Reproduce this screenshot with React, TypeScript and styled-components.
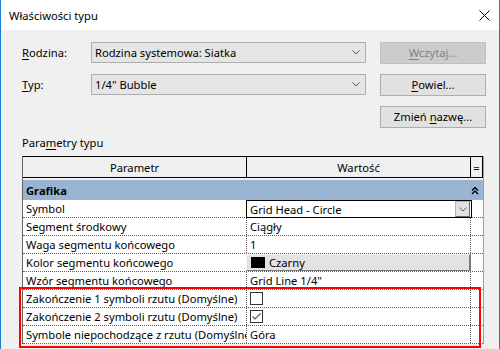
import React from 'react';
import styled, { createGlobalStyle, css } from 'styled-components';

const GlobalStyle = createGlobalStyle`
  html, body {
    margin: 0;
    padding: 0;
    background: #f0f0f0;
  }
  body {
    font-family: "Noto Sans", "DejaVu Sans", sans-serif;
    font-size: 11.2px;
    color: #000;
  }
  u {
    text-underline-offset: 2px;
  }
`;

const Window = styled.div`
  width: 500px;
  height: 349px;
  box-sizing: border-box;
  overflow: hidden;
  border-left: 1px solid #1a7fd4;
  border-right: 1px solid #1a7fd4;
  background: #f0f0f0;
  display: flex;
  flex-direction: column;
`;

const TitleBar = styled.div`
  flex: none;
  height: 30px;
  background: #fff;
  display: flex;
  align-items: center;
  justify-content: space-between;
  padding: 0 9px 0 8px;
`;

const Body = styled.div`
  padding: 12px 0 0 21px;
`;

const TopForm = styled.div`
  display: grid;
  grid-template-columns: 55px 275px 106px;
  grid-auto-rows: 21px;
  column-gap: 14px;
  row-gap: 11px;
  align-items: center;
`;

const Label = styled.div`
  white-space: nowrap;
`;

const Combo = styled.div`
  height: 21px;
  box-sizing: border-box;
  border: 1px solid #adadad;
  background: #e5e5e5;
  display: flex;
  align-items: center;
  justify-content: space-between;
  padding: 0 5px 0 3px;
  white-space: nowrap;
`;

const Button = styled.div<{ $disabled?: boolean; $col?: number }>`
  height: 22px;
  box-sizing: border-box;
  border: 1px solid #adadad;
  background: #e1e1e1;
  display: flex;
  align-items: center;
  justify-content: center;
  white-space: pre;
  ${(p) => p.$col && css`grid-column: ${p.$col};`}
  ${(p) =>
    p.$disabled &&
    css`
      background: #cccccc;
      border-color: #bfbfbf;
      color: #838383;
    `}
`;

const SectionLabel = styled.div`
  margin: 8px 0 5px 0;
  height: 16px;
  line-height: 16px;
`;

const PropGrid = styled.div`
  width: 462px;
  box-sizing: border-box;
  border-left: 1px solid #646464;
  border-right: 1px solid #a0a0a0;
  display: flex;
  flex-direction: column;
`;

const HeaderRow = styled.div`
  display: grid;
  grid-template-columns: 224px 224px 12px;
  height: 22px;
  box-sizing: border-box;
  border-top: 1px solid #000;
  border-bottom: 1px solid #000;
  margin-bottom: 2px;
`;

const HeaderCell = styled.div`
  border-right: 1px solid #000;
  display: flex;
  align-items: center;
  justify-content: center;
`;

const GroupRow = styled.div`
  display: grid;
  grid-template-columns: 448px 12px;
  height: 20px;
  background: #99b4d1;
  align-items: center;
`;

const GroupTitle = styled.div`
  font-weight: bold;
  padding-left: 3px;
`;

const Row = styled.div`
  display: grid;
  grid-template-columns: 224px 224px 12px;
  height: 18px;
  box-sizing: border-box;
  border-bottom: 1px dotted #5f5f5f;
  background: #fff;
`;

const Cell = styled.div<{ $last?: boolean }>`
  padding-left: 3px;
  line-height: 17px;
  white-space: nowrap;
  overflow: hidden;
  ${(p) => !p.$last && css`border-right: 1px dotted #5f5f5f;`}
`;

const ComboCell = styled.div`
  margin: 0 -1px -1px -1px;
  height: 18px;
  box-sizing: border-box;
  border: 1px solid #000;
  background: #fff;
  display: flex;
  align-items: center;
  justify-content: space-between;
  padding-left: 3px;
`;

const DropButton = styled.div`
  width: 15px;
  height: 16px;
  box-sizing: border-box;
  margin-right: 1px;
  background: #e1e1e1;
  border: 1px solid #b4b4b4;
  border-right-color: #6a6a6a;
  border-bottom-color: #6a6a6a;
  display: flex;
  align-items: center;
  justify-content: center;
`;

const ColorButton = styled.div`
  margin-left: -1px;
  height: 17px;
  box-sizing: border-box;
  background: #e3e3e3;
  border: 1px solid #f4f4f4;
  border-right: 2px solid #7a7a7a;
  border-bottom: 1px solid #7a7a7a;
  display: flex;
  align-items: center;
  gap: 4px;
  padding-left: 4px;
`;

const Swatch = styled.div`
  width: 14px;
  height: 11px;
  background: #000;
`;

const CheckBox = styled.div`
  width: 13px;
  height: 13px;
  margin-top: 2px;
  box-sizing: border-box;
  border: 1px solid #333;
  background: #fff;
  display: flex;
  align-items: center;
  justify-content: center;
`;

const Highlight = styled.div`
  position: relative;
  &::after {
    content: '';
    position: absolute;
    top: -3px;
    left: -4px;
    right: 2px;
    bottom: -4px;
    border: 2px solid #f00;
    pointer-events: none;
  }
`;

const Chevron = () => (
  <svg width="8" height="5" viewBox="0 0 8 5">
    <polyline points="0.5,0.5 4,4 7.5,0.5" fill="none" stroke="#606060" strokeWidth="1" />
  </svg>
);

const CloseIcon = () => (
  <svg width="11" height="11" viewBox="0 0 11 11">
    <path d="M0.5 0.5 L10.5 10.5 M10.5 0.5 L0.5 10.5" stroke="#000" strokeWidth="1" />
  </svg>
);

const CollapseIcon = () => (
  <svg width="8" height="9" viewBox="0 0 8 9">
    <polyline points="1,4.5 4,1.5 7,4.5" fill="none" stroke="#000" strokeWidth="1.4" />
    <polyline points="1,8 4,5 7,8" fill="none" stroke="#000" strokeWidth="1.4" />
  </svg>
);

const CheckMark = () => (
  <svg width="11" height="11" viewBox="0 0 11 11">
    <polyline points="1.5,5.5 4,8 9.5,2.5" fill="none" stroke="#5a5a5a" strokeWidth="1.2" />
  </svg>
);

type Param = {
  name: string;
  value: React.ReactNode;
  raw?: boolean;
};

const params: Param[] = [
  {
    name: 'Symbol',
    raw: true,
    value: (
      <ComboCell>
        Grid Head - Circle
        <DropButton>
          <Chevron />
        </DropButton>
      </ComboCell>
    )
  },
  { name: 'Segment środkowy', value: 'Ciągły' },
  { name: 'Waga segmentu końcowego', value: '1' },
  {
    name: 'Kolor segmentu końcowego',
    raw: true,
    value: (
      <ColorButton>
        <Swatch />
        Czarny
      </ColorButton>
    )
  },
  { name: 'Wzór segmentu końcowego', value: 'Grid Line 1/4"' }
];

const highlighted: Param[] = [
  { name: 'Zakończenie 1 symboli rzutu (Domyślne)', value: <CheckBox /> },
  {
    name: 'Zakończenie 2 symboli rzutu (Domyślne)',
    value: (
      <CheckBox>
        <CheckMark />
      </CheckBox>
    )
  },
  { name: 'Symbole niepochodzące z rzutu (Domyślne)', value: 'Góra' }
];

const ParamRow: React.FC<{ param: Param }> = ({ param }) => (
  <Row>
    <Cell>{param.name}</Cell>
    {param.raw ? <div>{param.value}</div> : <Cell>{param.value}</Cell>}
    <Cell $last />
  </Row>
);

const App: React.FC = () => {
  return (
    <Window>
      <GlobalStyle />
      <TitleBar>
        <span>Właściwości typu</span>
        <CloseIcon />
      </TitleBar>
      <Body>
        <TopForm>
          <Label>
            <u>R</u>odzina:
          </Label>
          <Combo>
            Rodzina systemowa: Siatka
            <Chevron />
          </Combo>
          <Button $disabled>
            <span>
              <u>W</u>czytaj...
            </span>
          </Button>
          <Label>
            <u>T</u>yp:
          </Label>
          <Combo>
            1/4" Bubble
            <Chevron />
          </Combo>
          <Button>
            <span>
              <u>P</u>owiel...
            </span>
          </Button>
          <Button $col={3}>
            <span>
              Zmień <u>n</u>azwę...
            </span>
          </Button>
        </TopForm>
        <SectionLabel>
          Para<u>m</u>etry typu
        </SectionLabel>
        <PropGrid>
          <HeaderRow>
            <HeaderCell>Parametr</HeaderCell>
            <HeaderCell>Wartość</HeaderCell>
            <HeaderCell>=</HeaderCell>
          </HeaderRow>
          <GroupRow>
            <GroupTitle>Grafika</GroupTitle>
            <CollapseIcon />
          </GroupRow>
          {params.map((p) => (
            <ParamRow key={p.name} param={p} />
          ))}
          <Highlight>
            {highlighted.map((p) => (
              <ParamRow key={p.name} param={p} />
            ))}
          </Highlight>
        </PropGrid>
      </Body>
    </Window>
  );
};

export default App;
